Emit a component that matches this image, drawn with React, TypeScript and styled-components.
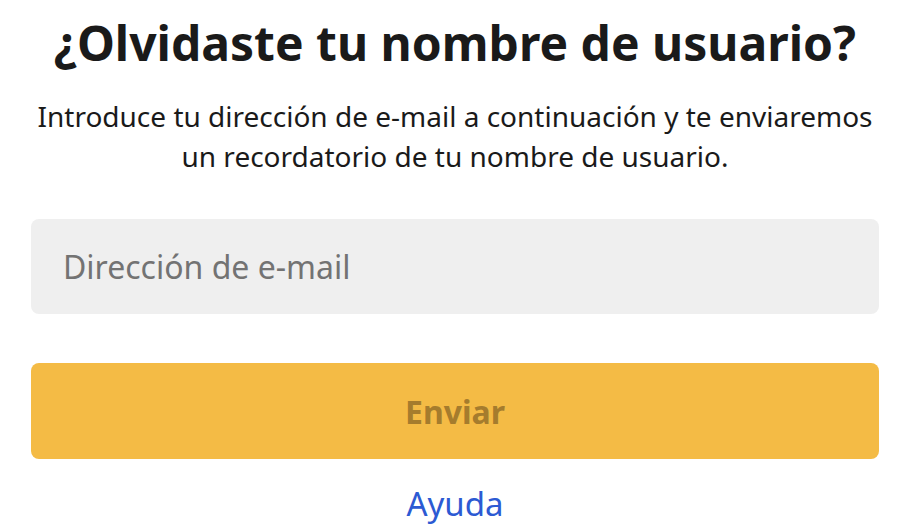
import React from "react";
import styled, { createGlobalStyle } from "styled-components";

const Global = createGlobalStyle`
  html, body { margin: 0; padding: 0; background: #fff; }
  body { font-family: "Noto Sans", "Open Sans", sans-serif; }
`;

const Page = styled.div`
  width: 902px;
  box-sizing: border-box;
  padding: 10px 23px 0 31px;
  display: flex;
  flex-direction: column;
  align-items: stretch;
`;

const Title = styled.h1`
  margin: 0;
  font-size: 48px;
  font-weight: 700;
  line-height: 66px;
  color: #1a1a1a;
  text-align: center;
  white-space: nowrap;
`;

const Intro = styled.p`
  margin: 20px 0 0;
  font-size: 28px;
  line-height: 40px;
  color: #1a1a1a;
  text-align: center;
  white-space: nowrap;
`;

const Input = styled.input`
  margin-top: 43px;
  height: 95px;
  box-sizing: border-box;
  border: none;
  border-radius: 8px;
  background: #efefef;
  padding: 0 32px;
  font-family: inherit;
  font-size: 32px;
  color: #333;
  outline: none;
  &::placeholder { color: #737373; }
`;

const Button = styled.button`
  margin-top: 49px;
  height: 96px;
  border: none;
  border-radius: 8px;
  background: #f4bb45;
  font-family: inherit;
  font-size: 32px;
  font-weight: 700;
  color: #a57c2d;
`;

const Help = styled.a`
  margin-top: 22px;
  align-self: center;
  font-size: 33px;
  color: #2c5ad3;
  text-decoration: none;
`;

export default function App() {
  return (
    <>
      <Global />
      <Page>
        <Title>¿Olvidaste tu nombre de usuario?</Title>
        <Intro>
          Introduce tu dirección de e-mail a continuación y te enviaremos
          <br />
          un recordatorio de tu nombre de usuario.
        </Intro>
        <Input placeholder="Dirección de e-mail" />
        <Button>Enviar</Button>
        <Help href="#">Ayuda</Help>
      </Page>
    </>
  );
}
